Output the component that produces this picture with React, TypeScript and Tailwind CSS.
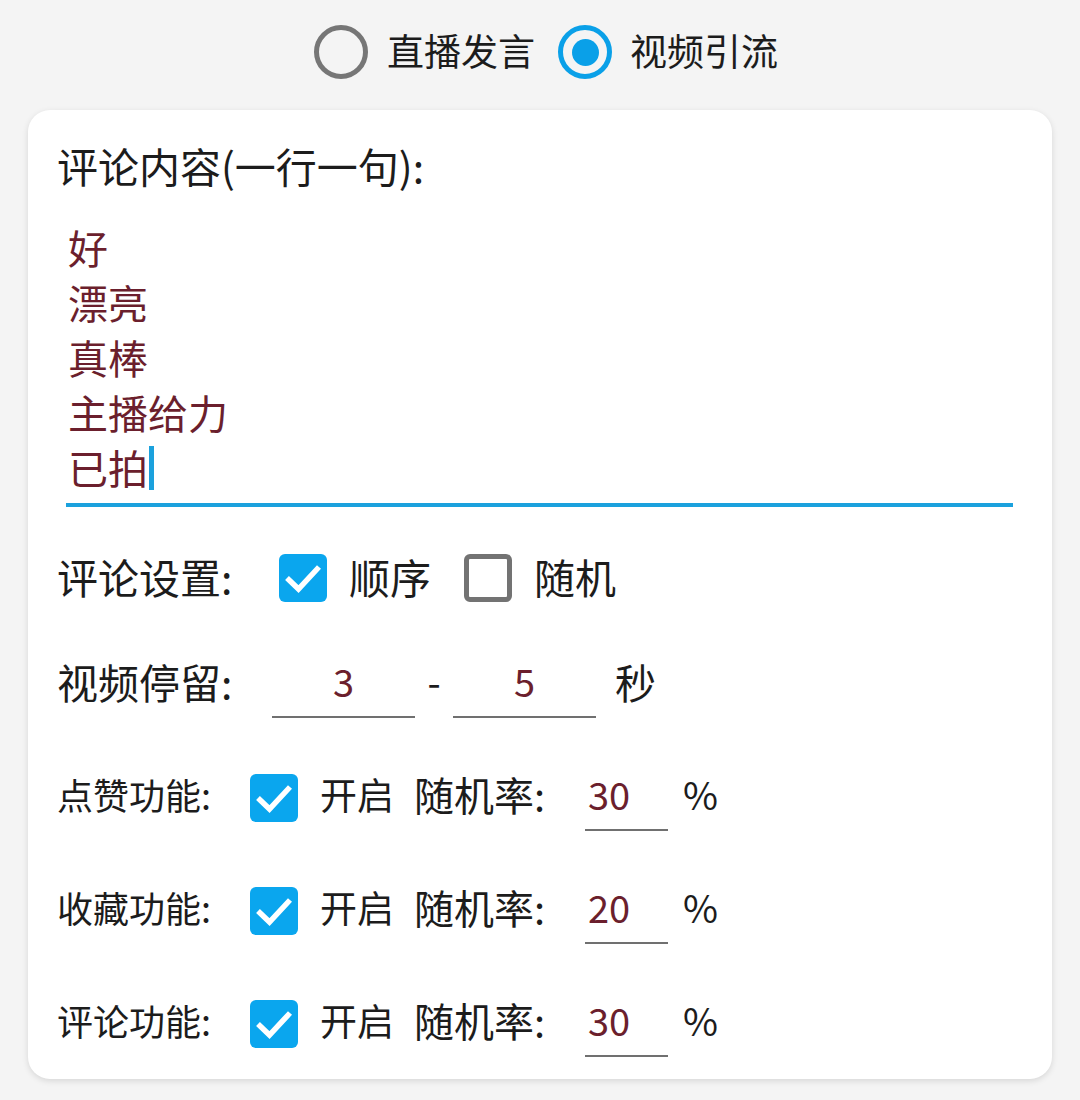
import React from "react";

const lines = ["好", "漂亮", "真棒", "主播给力", "已拍"];

function Check() {
  return (
    <div className="h-[48px] w-[48px] shrink-0 rounded-[6px] bg-[#0aa6ee]">
      <svg width="48" height="48" viewBox="0 0 48 48">
        <path
          d="M8 24 L19.5 35 L40 13"
          fill="none"
          stroke="white"
          strokeWidth="5.5"
          strokeLinejoin="miter"
        />
      </svg>
    </div>
  );
}

function Unchecked() {
  return (
    <div className="h-[48px] w-[48px] shrink-0 rounded-[6px] border-[5px] border-[#737373]" />
  );
}

function Feature({ label, rate }: { label: string; rate: string }) {
  return (
    <div className="flex h-[66px] items-center">
      <div className="w-[193px] pb-[8px] text-[36px] leading-[50px]">{label}</div>
      <Check />
      <div className="ml-[22px] w-[94px] pb-[8px] text-[37px] leading-[50px]">开启</div>
      <div className="w-[171px] pb-[8px] text-[40px] leading-[50px]">随机率:</div>
      <div className="flex h-[66px] w-[83px] items-center border-b-2 border-[#707070] pb-[8px] pl-[3px] text-[38px] text-[#6b1f2d]">
        {rate}
      </div>
      <div className="ml-[15px] pb-[8px] text-[38px] leading-[50px]">%</div>
    </div>
  );
}

export default function App() {
  return (
    <div className="h-[1100px] w-[1080px] bg-[#f4f4f4] font-['Noto_Sans_CJK_SC',sans-serif] text-[#1c1c1c]">
      <div className="flex h-[104px] items-center justify-center pl-[12px]">
        <div className="h-[54px] w-[54px] rounded-full border-[5px] border-[#767676]" />
        <span className="ml-[19px] pb-[4px] text-[37px] leading-[50px]">直播发言</span>
        <div className="ml-[23px] flex h-[54px] w-[54px] items-center justify-center rounded-full border-[5px] border-[#0aa0e8]">
          <div className="h-[27px] w-[27px] rounded-full bg-[#0aa0e8]" />
        </div>
        <span className="ml-[18px] pb-[4px] text-[37px] leading-[50px]">视频引流</span>
      </div>

      <div className="mx-[28px] mt-[6px] rounded-[22px] bg-white pb-[22px] pl-[29px] pr-[39px] pt-[30px] shadow-[0_2px_6px_rgba(0,0,0,0.12)]">
        <div className="h-[50px] text-[41px] leading-[50px]">评论内容(一行一句):</div>

        <div className="ml-[9px] mt-[30px] border-b-4 border-[#1ba1dd] pb-[8px] pl-[2px] text-[40px] leading-[55px] text-[#6b1f2d]">
          {lines.map((l, i) => (
            <div key={i} className="flex items-center">
              {l}
              {i === lines.length - 1 && (
                <span className="ml-[1px] inline-block h-[44px] w-[5px] bg-[#1ba1dd]" />
              )}
            </div>
          ))}
        </div>

        <div className="mt-[41px] flex h-[60px] items-center">
          <div className="w-[222px] pb-[4px] text-[41px] leading-[50px]">评论设置:</div>
          <Check />
          <div className="ml-[22px] w-[115px] pb-[4px] text-[41px] leading-[50px]">顺序</div>
          <Unchecked />
          <div className="ml-[22px] pb-[4px] text-[41px] leading-[50px]">随机</div>
        </div>

        <div className="mt-[46px] flex h-[64px] items-center">
          <div className="w-[215px] pb-[10px] text-[41px] leading-[50px]">视频停留:</div>
          <div className="flex h-[64px] w-[143px] items-center justify-center border-b-2 border-[#707070] pb-[10px] text-[38px] text-[#6b1f2d]">
            3
          </div>
          <div className="w-[38px] pb-[10px] text-center text-[38px] leading-[50px]">-</div>
          <div className="flex h-[64px] w-[143px] items-center justify-center border-b-2 border-[#707070] pb-[10px] text-[38px] text-[#6b1f2d]">
            5
          </div>
          <div className="ml-[19px] pb-[10px] text-[41px] leading-[50px]">秒</div>
        </div>

        <div className="mt-[47px] flex flex-col gap-[47px]">
          <Feature label="点赞功能:" rate="30" />
          <Feature label="收藏功能:" rate="20" />
          <Feature label="评论功能:" rate="30" />
        </div>
      </div>
    </div>
  );
}
